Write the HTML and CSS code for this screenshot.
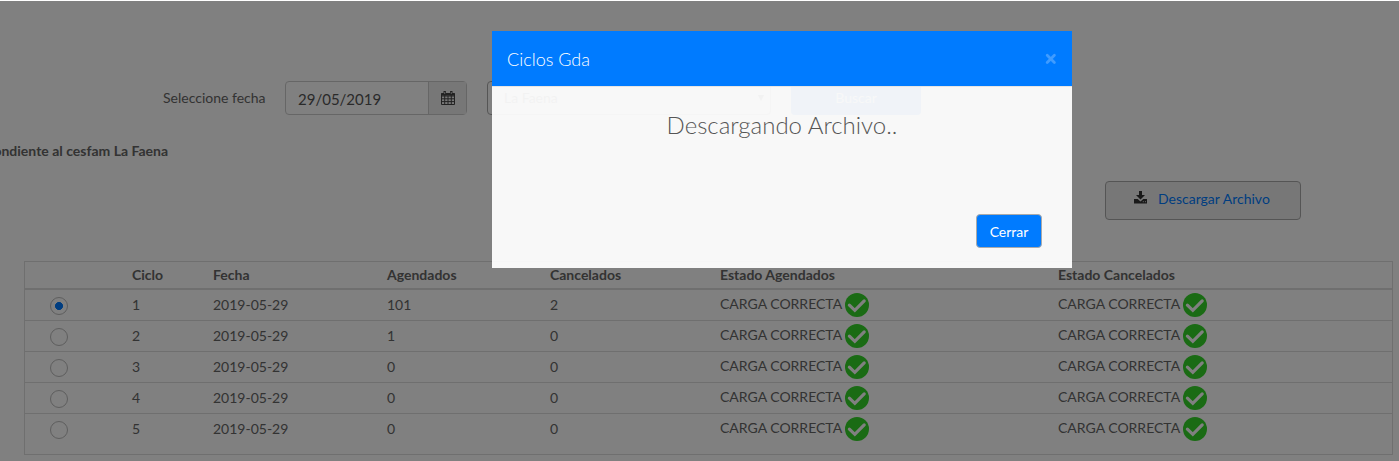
FILE: index.html
```
<!DOCTYPE html>
<html lang="es">
<head>
<meta charset="utf-8">
<title>Ciclos Gda</title>
<link rel="stylesheet" href="styles.css">
</head>
<body>
<svg width="0" height="0" class="defs"><defs>
<symbol id="ok" viewBox="0 0 24 24"><circle cx="12" cy="12" r="12" fill="#34d628"/><path d="M4.4 12.2 9.8 17.3 19.2 7.9" fill="none" stroke="#fff" stroke-width="3.2" stroke-linecap="round"/></symbol>
</defs></svg>
<main class="page">
  <form class="filters">
    <label class="label">Seleccione fecha</label>
    <div class="date"><span class="date-value">29/05/2019</span><span class="addon"><svg width="14" height="14" viewBox="0 0 14 14"><path d="M.5 2.5h13v11H.5zM.5 5h13M.5 7.8h13M.5 10.6h13M3.7 5v8.5M7 5v8.5M10.3 5v8.5" fill="none" stroke="#444"/><path d="M.5 2h13v2.6H.5z" fill="#444"/><path d="M3.7 .5v3M10.3 .5v3" stroke="#444" stroke-width="2.4" stroke-linecap="round"/><path d="M3.7 1v2M10.3 1v2" stroke="#ddd" stroke-width=".8"/></svg></span></div>
    <div class="select"><span>La Faena</span><span class="caret"></span></div>
    <span class="search">Buscar</span>
  </form>
  <p class="summary"><b>Información correspondiente al cesfam La Faena</b></p>
  <div class="actions"><span class="download"><svg width="13" height="13" viewBox="0 0 13 13"><path d="M5 0h3v4h3L6.5 8.5 2 4h3z" fill="#333"/><path d="M0 8h3.7l2.8 2.5L9.3 8H13v4.4H0z" fill="#333"/><path d="M8.8 10.7h1M11 10.7h1" stroke="#ccc"/></svg>Descargar Archivo</span></div>
  <div class="grid">
    <div class="row head"><span></span><span>Ciclo</span><span>Fecha</span><span>Agendados</span><span>Cancelados</span><span>Estado Agendados</span><span>Estado Cancelados</span></div>
    <div class="row"><i class="radio on"></i><span>1</span><span>2019-05-29</span><span>101</span><span>2</span><span class="state">CARGA CORRECTA<svg><use href="#ok"/></svg></span><span class="state">CARGA CORRECTA<svg><use href="#ok"/></svg></span></div>
    <div class="row"><i class="radio"></i><span>2</span><span>2019-05-29</span><span>1</span><span>0</span><span class="state">CARGA CORRECTA<svg><use href="#ok"/></svg></span><span class="state">CARGA CORRECTA<svg><use href="#ok"/></svg></span></div>
    <div class="row"><i class="radio"></i><span>3</span><span>2019-05-29</span><span>0</span><span>0</span><span class="state">CARGA CORRECTA<svg><use href="#ok"/></svg></span><span class="state">CARGA CORRECTA<svg><use href="#ok"/></svg></span></div>
    <div class="row"><i class="radio"></i><span>4</span><span>2019-05-29</span><span>0</span><span>0</span><span class="state">CARGA CORRECTA<svg><use href="#ok"/></svg></span><span class="state">CARGA CORRECTA<svg><use href="#ok"/></svg></span></div>
    <div class="row"><i class="radio"></i><span>5</span><span>2019-05-29</span><span>0</span><span>0</span><span class="state">CARGA CORRECTA<svg><use href="#ok"/></svg></span><span class="state">CARGA CORRECTA<svg><use href="#ok"/></svg></span></div>
  </div>
</main>
<div class="backdrop"></div>
<section class="modal">
  <header class="modal-head"><span>Ciclos Gda</span><svg width="12" height="12" viewBox="0 0 12 12"><path d="M2.2 2.2l7.2 7.2M9.4 2.2 2.2 9.4" stroke="#409cff" stroke-width="2.8" stroke-linecap="round"/></svg></header>
  <div class="modal-body">Descargando Archivo..</div>
  <footer class="modal-foot"><span class="close">Cerrar</span></footer>
</section>
</body>
</html>
```
FILE: styles.css
```
* { box-sizing: border-box; }
body { margin: 0; height: 461px; overflow: hidden; position: relative; background: #fff; color: #666; font: 14px/20px Lato, sans-serif; }
.defs { position: absolute; }
.page { padding-top: 81px; }
.filters { display: flex; align-items: center; height: 34px; padding-left: 163px; }
.label { width: 122px; }
.date { display: flex; width: 182px; height: 34px; border: 1px solid #ccc; border-radius: 4px; margin-right: 20px; color: #555; font-size: 15px; }
.date-value { flex: 1; padding: 7px 12px; }
.addon { display: flex; align-items: center; justify-content: center; width: 38px; background: #eee; border-left: 1px solid #ccc; }
.select { display: flex; align-items: center; justify-content: space-between; width: 284px; height: 34px; padding: 0 6px 0 16px; border: 1px solid #aaa; border-radius: 4px; margin-right: 20px; color: #555; }
.caret { border: 3px solid transparent; border-top: 6px solid #444; border-bottom: 0; }
.search { width: 130px; height: 34px; line-height: 34px; border-radius: 4px; background: #007bff; color: #fff; text-align: center; }
.summary { display: flex; justify-content: flex-end; width: 168px; height: 20px; margin: 26px 0 20px; white-space: nowrap; }
.actions { display: flex; padding-left: 1105px; }
.download { display: flex; align-items: flex-start; gap: 11px; width: 196px; height: 39px; padding: 7px 0 0 28px; border: 1px solid #aaa; border-radius: 4px; background: #eee; color: #007bff; }
.download svg { margin-top: 2px; }
.grid { width: 1369px; height: 194px; margin: 41px 0 0 24px; border: 1px solid #ddd; }
.row { display: grid; grid-template-columns: 107px 81px 174px 163px 170px 338px 1fr; height: 31px; padding-top: 5px; border-bottom: 1px solid #ddd; line-height: 20px; }
.row:last-child { border-bottom: 0; }
.head { height: 28px; padding-top: 3px; border-bottom-width: 2px; font-weight: 700; }
.radio { width: 18px; height: 18px; margin: 2px 0 0 25px; border: 1px solid #bbb; border-radius: 50%; }
.on { border-color: #bbb; background: radial-gradient(circle, #007bff 3.7px, transparent 4.3px); }
.state { display: flex; gap: 3px; margin-top: -1px; }
.state svg { width: 24px; height: 24px; margin-top: -1px; }
.backdrop { position: absolute; inset: 1px 0 0; background: rgba(0, 0, 0, .498); }
.modal { position: absolute; left: 492px; top: 31px; width: 580px; height: 237px; background: rgba(255, 255, 255, .943); }
.modal-head { display: flex; align-items: center; justify-content: space-between; height: 56px; padding: 0 15px; background: #007bff; border-bottom: 1px solid #e5e5e5; color: #fff; font-size: 18px; font-weight: 300; }
.modal-body { height: 127px; padding-top: 24px; text-align: center; font-size: 24px; line-height: 28px; font-weight: 300; color: #555; }
.modal-foot { display: flex; justify-content: flex-end; padding-right: 30px; }
.close { width: 66px; height: 34px; border: 1px solid #aaa; border-radius: 4px; background: #007bff; color: #fff; text-align: center; line-height: 33px; }
```
